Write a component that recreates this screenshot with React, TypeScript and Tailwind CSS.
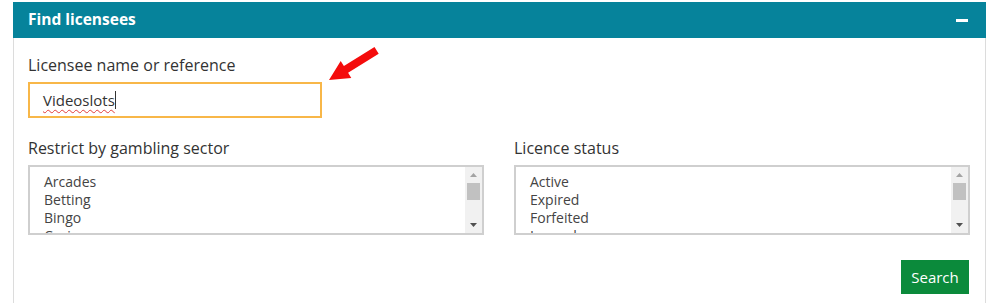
import React from "react";

const font = { fontFamily: '"Open Sans", "Noto Sans", Arial, sans-serif' };

function ListBox({ items }: { items: string[] }) {
  return (
    <div className="relative h-[70px] border-2 border-[#cfcfcf] bg-white overflow-hidden">
      <div className="pl-[14px] pt-[6px] pr-[20px] text-[14px] leading-[18px] text-[#444]">
        {items.map((it) => (
          <div key={it}>{it}</div>
        ))}
      </div>
      <div className="absolute right-0 top-0 bottom-0 w-[17px] bg-[#f1f1f1] flex flex-col items-center">
        <svg width="17" height="15" viewBox="0 0 17 15" className="shrink-0">
          <path d="M5 10 L8.5 6 L12 10 Z" fill="#a3a3a3" />
        </svg>
        <div className="w-[13px] h-[17px] bg-[#c1c1c1] mt-[1px]" />
        <div className="flex-1" />
        <svg width="17" height="15" viewBox="0 0 17 15" className="shrink-0">
          <path d="M5 5 L12 5 L8.5 9 Z" fill="#505050" />
        </svg>
      </div>
    </div>
  );
}

export default function App() {
  return (
    <div className="w-[1000px] h-[303px] bg-white overflow-hidden pt-[2px] pl-[13px]" style={font}>
      <div className="w-[973px] relative">
        <div className="h-[36px] bg-[#06839b] flex items-center justify-between pl-[15px] pr-[18px]">
          <span className="text-white font-bold text-[15.5px]">Find licensees</span>
          <span className="block w-[12px] h-[3px] bg-white" />
        </div>
        <div className="border-x border-[#dcdcdc] pl-[14px] pr-[15px] pt-[16px] pb-[20px]">
          <div className="text-[16px] leading-[22px] text-[#333] mb-[6px]">Licensee name or reference</div>
          <div className="w-[294px] h-[36px] border-2 border-[#f8b748] flex items-center pl-[13px] text-[15px] text-[#333]">
            <span className="underline decoration-wavy decoration-[#e23b3b] decoration-1 underline-offset-[3px]">Videoslots</span>
            <span className="w-px h-[18px] bg-[#333]" />
          </div>
          <div className="flex gap-[30px] mt-[19px]">
            <div className="w-[456px]">
              <div className="text-[16px] leading-[22px] text-[#333] mb-[6px]">Restrict by gambling sector</div>
              <ListBox items={["Arcades", "Betting", "Bingo", "Casino"]} />
            </div>
            <div className="w-[456px]">
              <div className="text-[16px] leading-[22px] text-[#333] mb-[6px]">Licence status</div>
              <ListBox items={["Active", "Expired", "Forfeited", "Lapsed"]} />
            </div>
          </div>
          <div className="flex justify-end mt-[25px] pr-[1px]">
            <button className="w-[68px] h-[34px] bg-[#0b8a3b] text-white text-[15px]">Search</button>
          </div>
        </div>
        <svg className="absolute left-[312px] top-[43px]" width="60" height="40" viewBox="0 0 60 40">
          <path d="M4 35 L15.7 15.9 L18.9 21 L49.5 1.9 L53.7 8.7 L23.1 27.8 L26.3 32.9 Z" fill="#f40c0c" />
        </svg>
      </div>
    </div>
  );
}
